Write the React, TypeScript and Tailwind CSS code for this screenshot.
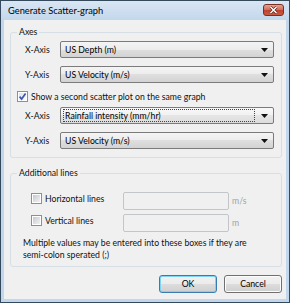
import React from "react";

function Check({ checked }: { checked?: boolean }) {
  return (
    <div className="w-[11px] h-[11px] border border-[#8e8f8f] bg-white p-[1px] shrink-0">
      <div
        className={
          checked
            ? "w-full h-full relative bg-[linear-gradient(135deg,#dfe3e8,#fbfbfb)]"
            : "w-full h-full relative bg-[linear-gradient(135deg,#c6c9cf,#f2f2f2)]"
        }
      >
        {checked && (
          <svg className="absolute left-[-1px] top-[-1px]" width="9" height="9" viewBox="0 0 9 9">
            <path d="M1.6 4.6 L3.6 7 L7.6 1.4" stroke="#3b59b5" strokeWidth="1.7" fill="none" />
          </svg>
        )}
      </div>
    </div>
  );
}

function Combo({ value, focused }: { value: string; focused?: boolean }) {
  return (
    <div
      className={
        focused
          ? "w-[214px] h-[17px] rounded-[2px] border border-[#7b7b7b] bg-[linear-gradient(#f8f8f8_0%,#f1f1f1_50%,#e6e6e6_50%,#dcdcdc_100%)] flex items-center pl-[2px] pr-[5px]"
          : "w-[214px] h-[17px] rounded-[2px] border border-[#7b7b7b] bg-[linear-gradient(#f4f4f4_0%,#ececec_50%,#dfdfdf_50%,#d3d3d3_100%)] flex items-center pl-[2px] pr-[5px]"
      }
    >
      {focused ? (
        <div className="flex-1 h-[13px] border border-dotted border-[#444] flex items-center pl-[1px] mr-[6px] text-black">
          {value}
        </div>
      ) : (
        <div className="flex-1 pl-[2px] text-black">{value}</div>
      )}
      <svg width="7" height="4" viewBox="0 0 7 4" className="shrink-0">
        <path d="M0 0H7L3.5 4Z" fill="#111" />
      </svg>
    </div>
  );
}

function AxisRow({ label, value, focused }: { label: string; value: string; focused?: boolean }) {
  return (
    <div className="flex items-center pl-[14px]">
      <div className="w-[35px]">{label}</div>
      <Combo value={value} focused={focused} />
    </div>
  );
}

function LineRow({ label, unit }: { label: string; unit: string }) {
  return (
    <div className="flex items-start pl-[20px]">
      <div className="w-[92px] flex items-center gap-[3px] h-[12px]">
        <Check />
        <span className="leading-[12px] mt-[1px]">{label}</span>
      </div>
      <div className="w-[106px] h-[18px] rounded-[2px] border border-[#c3c6c9] bg-[#f0f0f0]" />
      <span className="ml-[3px] mt-[3px] leading-[12px] text-[#a3a3a3]">{unit}</span>
    </div>
  );
}

export default function App() {
  return (
    <div className="w-[290px] h-[303px] border border-[#34495c] bg-[#c2d7ec] flex flex-col font-['Lato',sans-serif] text-[8.7px] leading-[12px] text-[#111]">
      <div className="h-[19px] shrink-0 flex items-center pl-[7px] pr-[5px] bg-[linear-gradient(#d9e6f3,#c3d7ec)]">
        <span className="flex-1 text-[9.3px] text-black">Generate Scatter-graph</span>
        <div className="w-[21px] h-[12px] rounded-[3px] border border-[#7d2e22] bg-[linear-gradient(#e3a597_0%,#d0705f_45%,#c0432f_55%,#c95a43_100%)] flex items-center justify-center mt-[-1px]">
          <svg width="9" height="8" viewBox="0 0 9 8">
            <path d="M1.5 1 L7.5 7 M7.5 1 L1.5 7" stroke="#5a1a12" strokeWidth="2.6" />
            <path d="M1.5 1 L7.5 7 M7.5 1 L1.5 7" stroke="#ffffff" strokeWidth="1.5" />
          </svg>
        </div>
      </div>
      <div className="flex-1 mx-[3px] mb-[3px] bg-[#f0f0f0] pt-[6px] flex flex-col">
        <fieldset className="ml-[6px] w-[272px] border border-[#d5dfe5] rounded-[3px] pb-[8px]">
          <legend className="ml-[6px] px-[2px] leading-[12px]">Axes</legend>
          <div className="flex flex-col mt-[3px]">
            <AxisRow label="X-Axis" value="US Depth (m)" />
            <div className="mt-[8px]">
              <AxisRow label="Y-Axis" value="US Velocity (m/s)" />
            </div>
            <div className="mt-[7px] pl-[6px] flex items-center gap-[3px] h-[13px]">
              <Check checked />
              <span>Show a second scatter plot on the same graph</span>
            </div>
            <div className="mt-[4px]">
              <AxisRow label="X-Axis" value="Rainfall intensity (mm/hr)" focused />
            </div>
            <div className="mt-[8px]">
              <AxisRow label="Y-Axis" value="US Velocity (m/s)" />
            </div>
          </div>
        </fieldset>
        <fieldset className="ml-[6px] mt-[9px] w-[272px] border border-[#d5dfe5] rounded-[3px] pb-[5px]">
          <legend className="ml-[6px] px-[2px] leading-[12px]">Additional lines</legend>
          <div className="mt-[13px] flex flex-col">
            <LineRow label="Horizontal lines" unit="m/s" />
            <div className="mt-[4px]">
              <LineRow label="Vertical lines" unit="m" />
            </div>
            <div className="mt-[5px] pl-[12px] leading-[12px]">
              <div>Multiple values may be entered into these boxes if they are</div>
              <div>semi-colon sperated (;)</div>
            </div>
          </div>
        </fieldset>
        <div className="mt-[8px] ml-[155px] flex gap-[7px]">
          <button className="w-[58px] h-[18px] rounded-[3px] border border-[#3a7bb0] bg-[linear-gradient(#f2f2f2_0%,#ebebeb_50%,#dddddd_50%,#cfcfcf_100%)] shadow-[inset_0_0_0_1px_#7fd3f5] text-black leading-[12px]">
            OK
          </button>
          <button className="w-[58px] h-[18px] rounded-[3px] border border-[#707070] bg-[linear-gradient(#f2f2f2_0%,#ebebeb_50%,#dddddd_50%,#cfcfcf_100%)] shadow-[inset_0_0_0_1px_#fcfcfc] text-black leading-[12px]">
            Cancel
          </button>
        </div>
      </div>
    </div>
  );
}
